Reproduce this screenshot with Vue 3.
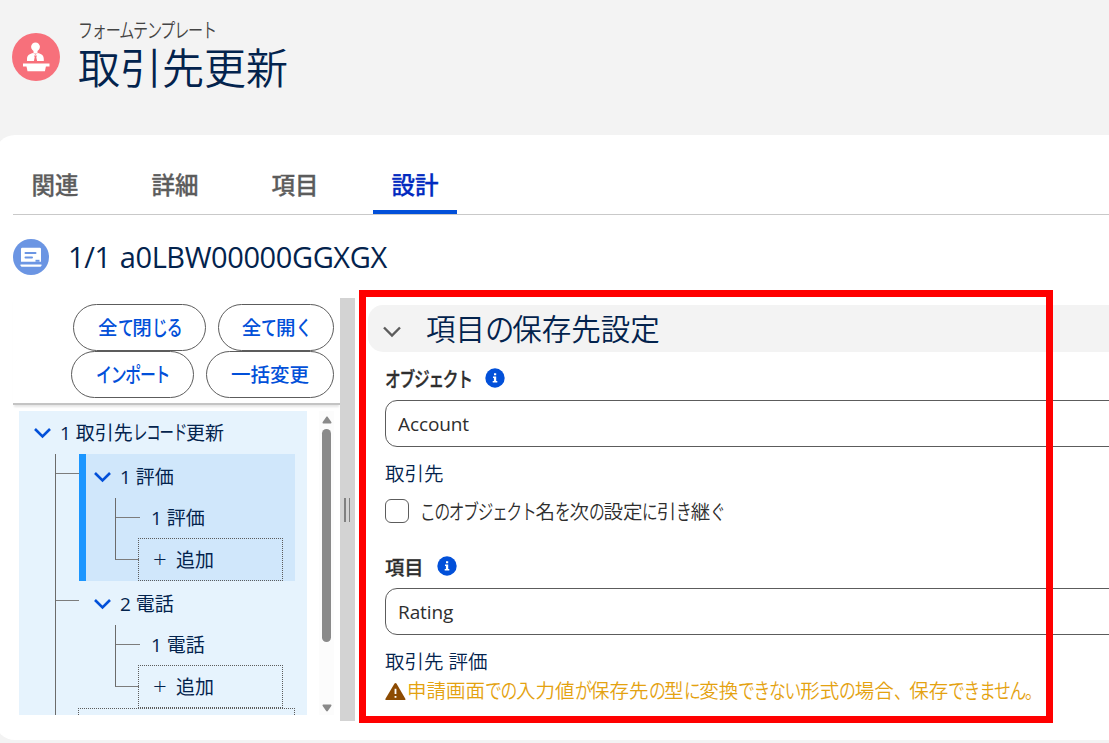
<template>
    <div class="page">
        <header class="page-header">
            <svg class="header-icon" viewBox="0 0 48 48">
                <circle cx="24" cy="24" r="24" fill="#f7707b" />
                <circle cx="23.5" cy="13.8" r="4.4" fill="#fff" />
                <path d="M21.5 17h4v3.6h-4z" fill="#fff" />
                <path d="M15 28v-2c0-3.6 3-5.3 6.2-5.9l2.3 1.6 2.3-1.6c3.2.6 6 2.3 6 5.9v2z" fill="#fff" />
                <path d="M22.1 22.5h2.8l-.6 1.7.8 3.8h-3.2l.8-3.8z" fill="#f7707b" />
                <path d="M11 30.5h26.5v3h-3.6l-1 4.7H15.5l-1-4.7H11z" fill="#fff" />
            </svg>
            <div class="header-text">
                <p class="header-type"><Jp text="フォームテンプレート" /></p>
                <h1 class="header-title">取引先更新</h1>
            </div>
        </header>

        <main class="card">
            <nav class="tabs">
                <button v-for="tab in tabs" :key="tab" class="tab" :class="{ active: tab === activeTab }" @click="activeTab = tab">{{ tab }}</button>
            </nav>

            <div class="record">
                <svg class="record-icon" viewBox="0 0 36 36">
                    <circle cx="18" cy="18" r="18" fill="#6b95e3" />
                    <path d="M8 10a1.2 1.2 0 0 1 1.2-1.2h17.6A1.2 1.2 0 0 1 28 10v12.8H8z" fill="#fff" />
                    <path d="M12.5 14h10M12.5 18.5h6.5" stroke="#6b95e3" stroke-width="2" stroke-linecap="round" />
                    <path d="M22.5 20.8h4v2h-4z" fill="#6b95e3" />
                    <path d="M7.5 25.500h21v1.2l-1 1h-19l-1-1z" fill="#fff" />
                </svg>
                <h2 class="record-name">1/1 a0LBW00000GGXGX</h2>
            </div>

            <div class="workspace">
                <aside class="side">
                    <div class="actions">
                        <div class="action-row">
                            <button class="pill close-all"><Jp text="全て閉じる" /></button>
                            <button class="pill open-all"><Jp text="全て開く" /></button>
                        </div>
                        <div class="action-row">
                            <button class="pill import"><Jp text="インポート" /></button>
                            <button class="pill bulk">一括変更</button>
                        </div>
                    </div>

                    <div class="tree-area">
                        <div class="tree">
                            <div class="tree-root">
                                <svg class="chevron" viewBox="0 0 18 12"><path d="M1.5 2 9 9.5 16.5 2" /></svg>
                                <Jp text="1 取引先レコード更新" />
                            </div>
                            <div class="tree-children">
                                <div v-for="(node, i) in nodes" :key="node.name" class="node" :class="{ selected: selected === i }" @click="selected = i">
                                    <div class="node-head">
                                        <svg class="chevron" viewBox="0 0 18 12"><path d="M1.5 2 9 9.5 16.5 2" /></svg>
                                        <span>{{ i + 1 }} {{ node.name }}</span>
                                    </div>
                                    <div class="leaves">
                                        <div v-for="(leaf, j) in node.items" :key="leaf" class="leaf">{{ j + 1 }} {{ leaf }}</div>
                                        <div class="add-box"><span class="plus">+</span>追加</div>
                                    </div>
                                </div>
                                <div class="add-box outer"></div>
                            </div>
                        </div>
                        <div class="scrollbar">
                            <svg class="arrow" viewBox="0 0 10 8"><path d="M4.2 1 .7 6c-.5.8 0 1.5.8 1.5h7c.8 0 1.3-.7.8-1.5L5.8 1c-.4-.6-1.2-.6-1.6 0z" /></svg>
                            <div class="thumb"></div>
                            <svg class="arrow down" viewBox="0 0 10 8"><path d="M4.2 1 .7 6c-.5.8 0 1.5.8 1.5h7c.8 0 1.3-.7.8-1.5L5.8 1c-.4-.6-1.2-.6-1.6 0z" /></svg>
                        </div>
                    </div>
                </aside>

                <div class="splitter"><i class="grip"></i><i class="grip thin"></i></div>

                <section class="settings">
                    <h3 class="section-title">
                        <svg class="section-chevron" viewBox="0 0 20 13"><path d="M2 2.5 10 10.5 18 2.5" /></svg>
                        <Jp text="項目の保存先設定" />
                    </h3>
                    <div class="field">
                        <label class="label object-label"><Jp text="オブジェクト" /><InfoIcon /></label>
                        <input v-model="objectName" class="input" type="text">
                        <p class="help">取引先</p>
                        <label class="check">
                            <input type="checkbox" class="check-box">
                            <Jp text="このオブジェクト名を次の設定に引き継ぐ" />
                        </label>
                    </div>
                    <div class="field second">
                        <label class="label">項目<InfoIcon /></label>
                        <input v-model="fieldName" class="input" type="text">
                        <p class="help">取引先 評価</p>
                        <p class="warning">
                            <svg class="warning-icon" viewBox="0 0 22 19">
                                <path d="M10 1.2.5 17c-.5.9 0 1.5 1 1.5h18.8c1 0 1.5-.6 1-1.5L12 1.2c-.5-.8-1.5-.8-2 0z" fill="#8c4b02" />
                                <path d="M11 6.5V12M11 14.2v1.9" stroke="#fff" stroke-width="1.9" />
                            </svg>
                            <Jp text="申請画面での入力値が保存先の型に変換できない形式の場合、保存できません。" />
                        </p>
                    </div>
                </section>
            </div>
        </main>
        <div class="highlight"></div>
    </div>
</template>

<script setup>
    import { ref, h } from 'vue';

    //var
    const tabs = ['関連', '詳細', '項目', '設計'];
    const activeTab = ref('設計');
    const selected = ref(0);
    const objectName = ref('Account');
    const fieldName = ref('Rating');
    const nodes = ref([
        { name: '評価', items: ['評価'] },
        { name: '電話', items: ['電話'] },
    ]);

    // kana is set narrower than kanji, --n is the length of the run
    function Jp(props) {
        const runs = props.text.match(/[\u3001-\u30ff]+|[^\u3001-\u30ff]+/g);
        return h('span', { class: 'jp' }, runs.map((r) => {
            if (/[\u3001-\u30ff]/.test(r)) return h('span', { class: 'kana', style: { '--n': r.length } }, r);
            return r;
        }));
    }
    Jp.props = ['text'];

    function InfoIcon() {
        return h('svg', { class: 'info-icon', viewBox: '0 0 20 20' }, [
            h('circle', { cx: 10, cy: 10, r: 9.7, fill: '#0250d9' }),
            h('path', { d: 'M9 5.3h2.2v2H9zM8 8.5h3.2v4.6h1.1v1.5H7.7v-1.5h1.2V10H8z', fill: '#fff' }),
        ]);
    }
</script>

<style>
body {
    margin: 0;
    overflow: hidden;
    background: #f3f3f3;
}

.jp {
    white-space: pre;
}

.jp .kana {
    display: inline-block;
    letter-spacing: -0.08em;
    transform: scale(calc(var(--kana) * 1.087), 1.07);
    transform-origin: left 55%;
    margin-right: calc((var(--kana) - 0.92) * var(--n) * 1em);
}
</style>

<style scoped>
* {
    box-sizing: border-box;
}

.page {
    --kana: 0.75;
    position: relative;
    width: 100%;
    height: 743px;
    overflow: hidden;
    background: #f3f3f3;
    color: #03234d;
    font-family: "Open Sans", "Noto Sans CJK JP", sans-serif;
    font-size: 19.5px;
    font-weight: 350;
}

h1, h2, h3, p {
    margin: 0;
    font-weight: 350;
}

button, input {
    font-family: inherit;
}

.page-header {
    display: flex;
    height: 135px;
    padding: 18px 12px 0;
}

.header-icon {
    width: 48px;
    height: 48px;
    margin-top: 15px;
}

.header-text {
    margin-left: 18px;
}

.header-type {
    height: 25px;
    line-height: 26px;
    color: #444;
    font-size: 19px;
    --kana: 0.73;
}

.header-title {
    height: 50px;
    line-height: 50px;
    font-size: 42px;
}

.card {
    height: 605px;
    margin-left: -5px;
    padding: 19px 0 0 18px;
    border-radius: 20px 0 0 20px;
    background: #fff;
}

.tabs {
    display: flex;
    gap: 36px;
    height: 61px;
    border-bottom: 1px solid #c9c9c9;
}

.tab {
    width: 84px;
    padding: 4px 0 0;
    border: 0;
    border-bottom: 4px solid transparent;
    background: none;
    color: #5c5c5c;
    font-size: 23.5px;
    font-weight: 500;
    -webkit-text-stroke: 0.3px currentColor;
}

.tab.active {
    border-bottom-color: #0250d9;
    color: #022ac0;
}

.record {
    display: flex;
    align-items: center;
    gap: 19px;
    height: 83px;
    padding-top: 1px;
}

.record-icon {
    width: 36px;
    height: 36px;
}

.record-name {
    font-size: 29px;
    font-weight: 400;
    line-height: 40px;
    letter-spacing: -0.4px;
    word-spacing: 2px;
}

.workspace {
    display: flex;
    height: 423px;
}

.side {
    width: 327px;
    flex: none;
}

.actions {
    height: 107px;
    padding: 6px 6px 0 0;
    border-bottom: 2px solid #c4c4c4;
    box-shadow: 0 3px 2px -1px rgba(0, 0, 0, 0.1);
}

.action-row {
    display: flex;
    justify-content: flex-end;
    gap: 12px;
}

.pill {
    height: 47px;
    padding: 0 0 2px;
    border: 1px solid #5c5c5c;
    border-radius: 24px;
    background: #fff;
    color: #0250d9;
    font-size: 19.5px;
    font-weight: 500;
}

.close-all {
    width: 133px;
}

.open-all {
    width: 116px;
}

.import {
    width: 123px;
}

.bulk {
    width: 128px;
}

.tree-area {
    display: flex;
    justify-content: space-between;
    height: 310px;
    padding: 6px 6px 0;
}

.tree {
    width: 288px;
    height: 304px;
    overflow: hidden;
    background: #e6f3fd;
    font-weight: 400;
    --kana: 0.7;
}

.tree-root, .node-head {
    display: flex;
    align-items: center;
    gap: 8px;
    font-size: 19px;
}

.tree-root {
    height: 43px;
    padding: 0 0 1px 14px;
}

.chevron {
    width: 19px;
    height: 12px;
    margin-top: 2px;
    fill: none;
    stroke: #0250d9;
    stroke-width: 2.6;
}

.tree-children {
    height: 261px;
    margin-left: 36px;
    border-left: 1px solid #6b6b6b;
}

.node {
    display: flow-root;
    position: relative;
    width: 216px;
    height: 127px;
    margin-left: 23px;
    border-left: 7px solid transparent;
}

.node.selected {
    border-left-color: #1b96ff;
    background: #d0e7fb;
}

.node::before {
    content: "";
    position: absolute;
    top: 19px;
    left: -30px;
    width: 23px;
    border-top: 1px solid #7c7c7c;
}

.node-head {
    height: 44px;
    padding: 0 0 1px 7px;
}

.leaves {
    height: 62px;
    margin-left: 29px;
    border-left: 1px solid #6b6b6b;
    border-bottom: 1px solid #7c7c7c;
    width: 24px;
}

.leaf {
    position: relative;
    height: 40px;
    padding-left: 35px;
    line-height: 41px;
    font-size: 19px;
    white-space: nowrap;
}

.leaf::before {
    content: "";
    position: absolute;
    top: 19px;
    left: 0;
    width: 24px;
    border-top: 1px solid #7c7c7c;
}

.add-box {
    display: flex;
    align-items: center;
    width: 145px;
    height: 43px;
    margin-left: 22px;
    padding: 0 0 2px 14px;
    border: 1px dotted #5c5c5c;
    font-size: 19px;
}

.add-box.outer {
    width: 217px;
}

.plus {
    width: 23px;
    font-size: 24px;
    font-weight: 300;
}

.scrollbar {
    display: flex;
    flex-direction: column;
    align-items: center;
    width: 15px;
    height: 304px;
    padding: 5px 0 3px;
    background: #fcfcfc;
}

.arrow {
    width: 10px;
    height: 8px;
    fill: #8a8a8a;
}

.arrow.down {
    margin-top: auto;
    transform: rotate(180deg);
}

.thumb {
    width: 9px;
    height: 213px;
    margin-top: 5px;
    border-radius: 5px;
    background: #8a8a8a;
}

.splitter {
    display: flex;
    justify-content: center;
    align-items: center;
    gap: 3px;
    flex: none;
    width: 15px;
    padding-right: 1px;
    background: #d3d3d3;
}

.grip {
    width: 2px;
    height: 24px;
    background: #808080;
}

.grip.thin {
    width: 1px;
}

.settings {
    flex: none;
    width: 780px;
    padding: 7px 0 0 13px;
}

.section-title {
    display: flex;
    align-items: center;
    gap: 24px;
    height: 47px;
    padding: 0 0 3px 14px;
    border-radius: 15px;
    background: #f3f3f3;
    font-size: 29.5px;
    --kana: 0.92;
}

.section-chevron {
    width: 20px;
    height: 13px;
    margin-top: 9px;
    fill: none;
    stroke: #5c5c5c;
    stroke-width: 2.4;
}

.field {
    padding: 13px 0 0 17px;
    color: #2e2e2e;
}

.field.second {
    padding-top: 28px;
}

.label {
    display: flex;
    align-items: center;
    gap: 13px;
    height: 28px;
    font-size: 19.3px;
    font-weight: 500;
    -webkit-text-stroke: 0.3px currentColor;
}

.info-icon {
    width: 20px;
    height: 20px;
    margin-top: -3px;
    -webkit-text-stroke: 0;
}

.input {
    display: block;
    width: 780px;
    height: 47px;
    margin-top: 7px;
    padding: 0 12px;
    border: 1px solid #5c5c5c;
    border-radius: 12px;
    background: #fff;
    color: #2e2e2e;
    font-size: 19px;
    letter-spacing: -0.1px;
}

.help {
    height: 30px;
    margin-top: 12px;
    line-height: 30px;
    color: #03234d;
}

.check {
    display: flex;
    align-items: center;
    gap: 11px;
    height: 28px;
    margin-top: 8px;
    --kana: 0.74;
}

.check .jp {
    margin-top: -2px;
}

.check-box {
    appearance: none;
    width: 24px;
    height: 24px;
    margin: 0;
    border: 1px solid #5c5c5c;
    border-radius: 6px;
    background: #fff;
}

.warning {
    display: flex;
    align-items: center;
    gap: 1px;
    height: 30px;
    margin-top: -3px;
    color: #e4a210;
    --kana: 0.795;
}

.warning-icon {
    width: 21px;
    height: 19px;
    margin-top: 5px;
}

/* red frame over the form */
.highlight {
    position: absolute;
    top: 290px;
    left: 359px;
    width: 694px;
    height: 433px;
    border: 7px solid #ff0000;
    pointer-events: none;
}
</style>
